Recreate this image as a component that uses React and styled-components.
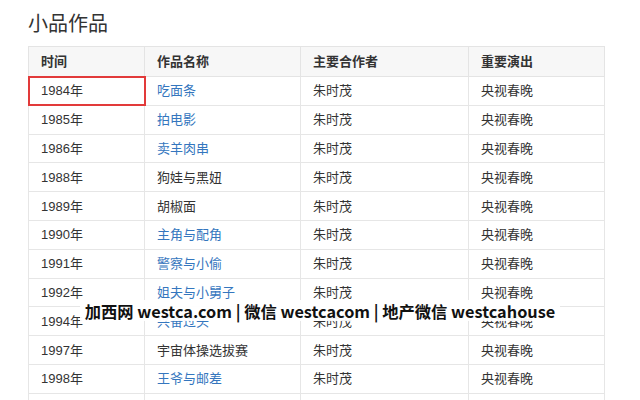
import React from "react";
import styled, { createGlobalStyle } from "styled-components";

const Global = createGlobalStyle`
  html, body { margin: 0; padding: 0; background: #fff; }
  body { font-family: "Liberation Sans", "Noto Sans CJK SC", sans-serif; color: #333; }
`;

const Page = styled.div`
  position: relative;
  width: 640px;
  height: 400px;
  overflow: hidden;
  padding: 11px 0 0 28px;
  box-sizing: border-box;
`;

const Title = styled.h2`
  margin: 0 0 11px 0;
  font-family: "Noto Sans CJK SC", sans-serif;
  font-weight: 400;
  font-size: 20px;
  line-height: 24px;
  color: #333;
`;

const Table = styled.table`
  border-collapse: collapse;
  width: 576px;
  table-layout: fixed;
  font-size: 13px;
`;

const Th = styled.th`
  box-sizing: border-box;
  height: 30px;
  padding: 0 12px 2px;
  text-align: left;
  background: #f7f7f7;
  border: 1px solid #e4e4e4;
  font-family: "Noto Sans CJK SC", sans-serif;
  font-weight: 700;
  color: #333;
  width: ${(p) => p.$w}px;
`;

const Td = styled.td`
  height: 28.8px;
  padding: 0 12px 2px;
  box-sizing: border-box;
  border: 1px solid #e6e6e6;
  color: ${(p) => (p.$link ? "#3476be" : "#333")};
  font-family: "Liberation Sans", "Noto Sans CJK SC", sans-serif;
  white-space: nowrap;
  ${(p) => p.$marked && `outline: 2px solid #e23a3a; outline-offset: -1px;`}
`;

const Watermark = styled.div`
  position: absolute;
  left: 80px;
  top: 300px;
  width: 480px;
  height: 21px;
  background: rgba(255, 255, 255, 0.93);
  display: flex;
  align-items: center;
  justify-content: center;
  font-family: "Noto Sans CJK SC", sans-serif;
  font-weight: 700;
  font-size: 16.3px;
  color: #111;
  white-space: nowrap;
`;

const rows = [
  ["1984年", "吃面条", true],
  ["1985年", "拍电影", true],
  ["1986年", "卖羊肉串", true],
  ["1988年", "狗娃与黑妞", false],
  ["1989年", "胡椒面", false],
  ["1990年", "主角与配角", true],
  ["1991年", "警察与小偷", true],
  ["1992年", "姐夫与小舅子", true],
  ["1994年", "兴奋过头", true],
  ["1997年", "宇宙体操选拔赛", false],
  ["1998年", "王爷与邮差", true],
  ["1999年", "昨天今天明天", false],
];

export default function App() {
  return (
    <>
      <Global />
      <Page>
        <Title>小品作品</Title>
        <Table>
          <thead>
            <tr>
              <Th $w={116}>时间</Th>
              <Th $w={156}>作品名称</Th>
              <Th $w={168}>主要合作者</Th>
              <Th $w={136}>重要演出</Th>
            </tr>
          </thead>
          <tbody>
            {rows.map(([y, name, link], i) => (
              <tr key={y}>
                <Td $marked={i === 0}>{y}</Td>
                <Td $link={link}>{name}</Td>
                <Td>朱时茂</Td>
                <Td>央视春晚</Td>
              </tr>
            ))}
          </tbody>
        </Table>
        <Watermark>加西网 westca.com | 微信 westcacom | 地产微信 westcahouse</Watermark>
      </Page>
    </>
  );
}
